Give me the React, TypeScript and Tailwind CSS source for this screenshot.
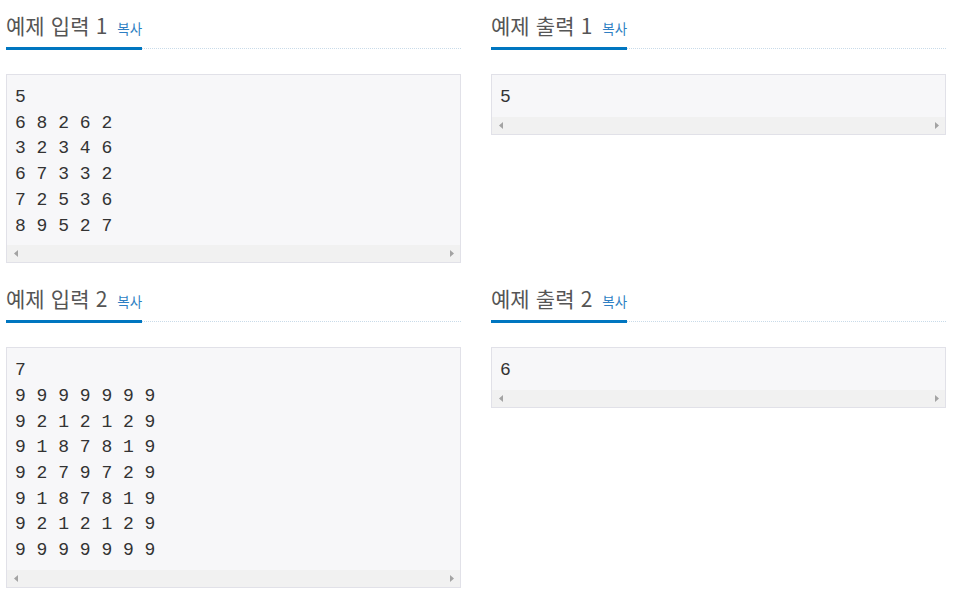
import React from "react";

type Sample = {
	title: string;
	data: string;
};

const rows: Sample[][] = [
	[
		{ title: "예제 입력 1", data: "5\n6 8 2 6 2\n3 2 3 4 6\n6 7 3 3 2\n7 2 5 3 6\n8 9 5 2 7" },
		{ title: "예제 출력 1", data: "5" },
	],
	[
		{
			title: "예제 입력 2",
			data: "7\n9 9 9 9 9 9 9\n9 2 1 2 1 2 9\n9 1 8 7 8 1 9\n9 2 7 9 7 2 9\n9 1 8 7 8 1 9\n9 2 1 2 1 2 9\n9 9 9 9 9 9 9",
		},
		{ title: "예제 출력 2", data: "6" },
	],
];

const ScrollBar = () => (
	<div className="flex h-[17px] items-center justify-between bg-[#f1f1f1]">
		<div className="flex h-[17px] w-[17px] items-center justify-center">
			<svg width="4" height="7" viewBox="0 0 4 7">
				<path d="M4 0 L0 3.5 L4 7 Z" fill="#a3a3a3" />
			</svg>
		</div>
		<div className="flex h-[17px] w-[17px] items-center justify-center">
			<svg width="4" height="7" viewBox="0 0 4 7">
				<path d="M0 0 L4 3.5 L0 7 Z" fill="#a3a3a3" />
			</svg>
		</div>
	</div>
);

const SampleBox: React.FC<Sample> = ({ title, data }) => (
	<section className="mb-[10px]">
		<div className="flex border-b border-dotted border-[#c9dbe9] pt-[10px]">
			<h2 className="-mb-[2px] h-[40px] border-b-[3px] border-[#0076c0] pt-[1px] pb-[8px] text-[21px] leading-[28px] font-normal whitespace-nowrap text-[#555] [word-spacing:1.5px] [font-family:'Noto_Sans_CJK_KR',sans-serif]">
				{title}
				<span className="ml-[10px] text-[13.5px] leading-none text-[#2f7fc3] [word-spacing:0]">복사</span>
			</h2>
		</div>
		<div className="mt-[25px] border border-[#e1e1e8] bg-[#f7f7f9]">
			<pre className="overflow-hidden px-[8px] pt-[10px] pb-[6px] text-[18px] leading-[1.42857] text-[#333] [font-family:'Liberation_Mono',monospace]">
				{data}
			</pre>
			<ScrollBar />
		</div>
	</section>
);

export default function App() {
	return (
		<div className="min-h-[600px] bg-white pl-[6px]">
			{rows.map((row, i) => (
				<div key={i} className="flex gap-[30px]">
					{row.map((s) => (
						<div key={s.title} className="w-[455px]">
							<SampleBox {...s} />
						</div>
					))}
				</div>
			))}
		</div>
	);
}
